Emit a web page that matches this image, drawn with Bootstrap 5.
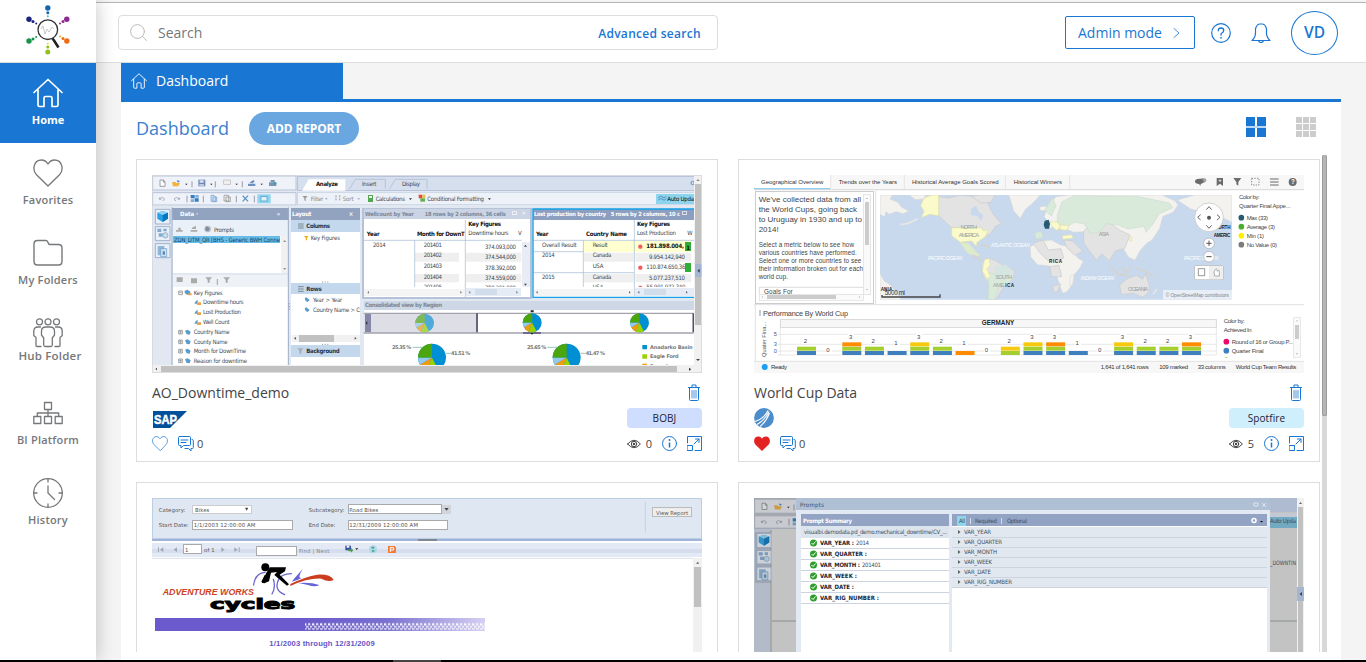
<!DOCTYPE html>
<html lang="en">
<head>
<meta charset="utf-8">
<title>Dashboard</title>
<link href="https://cdn.jsdelivr.net/npm/bootstrap@5.3.0/dist/css/bootstrap.min.css" rel="stylesheet">
<style>
:root{--hub:#1976d2}
body{font-family:"Open Sans","Noto Sans",sans-serif;background:#f4f4f4;color:#444;font-size:14px;height:662px;overflow:hidden}
svg{display:block;flex:none}
.ln{fill:none;stroke:currentColor;stroke-linecap:round;stroke-linejoin:round}
.shell{height:660px}
.side{width:96px;background:#fff;z-index:3;box-shadow:0 0 18px rgba(0,0,0,.24)}
.brand{height:62px}
.rule{height:1px;background:#ddd}
.side-link{height:80px;padding-top:15px;color:#75787b;font-size:11px;font-weight:600;letter-spacing:.2px;text-decoration:none;line-height:16px}
.side-link .lbl{margin-top:4px}
.side-link.on{background:var(--hub);color:#fff;font-weight:700;letter-spacing:0}
.side-link.hub .lbl{margin-top:0;padding-left:4px;font-size:11.5px}
.topbar{border-top:1px solid #b4b4b4;border-bottom:1px solid #ddd;background:#fff;margin-top:2px;height:61px;padding:0 28px 0 22px}
.finder{width:600px;height:35px;border:1px solid #ddd;border-radius:4px;padding:0 16px 0 11px}
.finder .hint{color:#777;margin-left:11px}
.finder .adv{font-size:12px;letter-spacing:.3px;padding-top:2px}
.blue{color:var(--hub)}
.admin{width:130px;height:33px;border:1px solid var(--hub);border-radius:2px;font-size:14px;padding:0 11px 0 12px}
.avatar{width:47px;height:44px;border:1px solid var(--hub);border-radius:50%;font-size:15.5px;font-weight:600}
.page{margin:0 25px}
.tabbar{height:39px;border-bottom:3px solid var(--hub)}
.tabbar .cur{width:222px;height:39px;background:var(--hub);color:#fff;padding:0 0 4px 10px;font-size:14px}
.panel{height:558px;background:#fff}
.headrow{height:53px;padding:0 25px 0 15px}
.headrow h1{font-size:18px;font-weight:400;margin:0;width:113px;color:#3a7fd0}
.headrow svg{margin-bottom:3px}
.addbtn{width:110px;height:33px;border-radius:17px;background:#6aa7e1;color:#fff;font-size:12px;font-weight:700;letter-spacing:-.15px}
.scroller{height:497px;overflow:hidden;padding:4px 0 0 15px}
.tiles{display:grid;grid-template-columns:582px 582px;gap:20px;grid-auto-rows:303px}
.tile{border:1px solid #ddd;background:#fff;padding:15px}
.trackbar{width:5px;height:497px;background:#d8d8d8;margin-left:2px}
.trackbar div{height:261px;background:#b5b5b5;border:1px solid #9b9b9b;border-width:0 1px 1px;border-radius:2px}
.ttl{height:20px;margin-top:10px;line-height:20px;font-size:14px}
.ttl svg{margin:1px 2px 0 0}
.logo-row{height:20px;margin-top:5px}
.tagpill{width:75px;height:20px;border-radius:4px;background:#cfdefe;color:#223;font-size:10px;letter-spacing:.1px;line-height:21px;text-align:center}
.tagpill.cy{background:#d0effd}
.acts{height:20px;margin-top:6px;font-size:11px}
.acts svg{margin-bottom:1px}
.acts .chats{margin-left:3px}
.acts .views{margin:0 10px 0 5px}
.gap10{margin-left:10px}
.base{height:2px;background:#000}
.base div{width:48px;height:2px;margin-left:393px;background:#444}
.tah{font-family:"DejaVu Sans Condensed","DejaVu Sans",sans-serif;font-size:18px}
.ver{font-family:"DejaVu Sans",sans-serif;font-size:17px}
.ari{font-family:"Liberation Sans",sans-serif;font-size:19px}
.bd{font-weight:700}
.sq rect{shape-rendering:crispEdges}
</style>
</head>
<body>
<svg width="0" height="0" class="position-absolute">
 <symbol id="trash" viewBox="0 0 12 17"><path class="ln" d="M.5 3.500h11M4 3V1h4v2M1.500 3.500v12q0 1 1 1h7q1 0 1-1v-12"/><path class="ln" stroke-width=".8" d="M4 6.500v7.500M6 6.500v7.500M8 6.500v7.500"/></symbol>
 <symbol id="heart" viewBox="0 0 30 28"><path class="ln" stroke-width="1.300" d="M15 27 3.500 15.800C-1 11 .5 1 8.500 1 12.500 1 15 5 15 5s2.500-4 6.500-4C29.500 1 31 11 26.500 15.800z"/></symbol>
 <symbol id="chat" viewBox="0 0 16 16"><path class="ln" d="M1.500.5h10q1 0 1 1v7q0 1-1 1h-6L3 12V9.500H1.500q-1 0-1-1v-7q0-1 1-1zM3 4h7M3 6.500h5M14 3.500q1.300 0 1.300 1v7q0 1-1 1H13V15l-2.500-2.500H7"/></symbol>
 <symbol id="eye" viewBox="0 0 14 10"><path class="ln" stroke-width="1" d="M.6 5Q7-2.600 13.400 5 7 12.600.6 5z"/><circle cx="7" cy="5" r="2.700" class="ln"/><circle cx="7" cy="5" r="1.200" fill="currentColor"/></symbol>
 <symbol id="info" viewBox="0 0 15 15"><circle cx="7.500" cy="7.500" r="7" class="ln"/><path d="M7.500 6.500v5" stroke="currentColor" stroke-width="1.500"/><circle cx="7.500" cy="4" r="1" fill="currentColor"/></symbol>
 <symbol id="expand" viewBox="0 0 15 15"><path class="ln" d="M.5 7V.5h14v14H8M.5 9.500h5v5h-5zM7 8l5-5M8.500 3H12v3.500"/></symbol>
 <symbol id="house" viewBox="0 0 30 30"><path class="ln" stroke-width="1.700" d="M1 14.500 15 1.500l14 13M5 11.500V27q0 1.500 1.500 1.500H11V20q0-1.500 1.500-1.500h5q1.500 0 1.500 1.500v8.500h4.500Q25 28.500 25 27V11.500"/></symbol>
 <symbol id="pie" viewBox="-30 -30 60 60"><circle r="28" fill="#008fd3"/><path d="M0 0V-28A28 28 0 0 0-28 0z" fill="#4ba50c"/><path d="M0 0H-28A28 28 0 0 0-24 14z" fill="#93c9ec"/><path d="M0 0-24 14A28 28 0 0 0-11 26z" fill="#f39b0a"/><path d="M0 0-11 26A28 28 0 0 0 13 25z" fill="#99d101"/></symbol>
 <symbol id="tools" viewBox="48 45 435 92"><rect x="50" y="48" width="430" height="42" fill="#eff2f8" stroke="#b7c3d8" stroke-width="3"/><rect x="50" y="98" width="430" height="37" fill="#eff2f8" stroke="#b7c3d8" stroke-width="3"/>
  <g fill="none" stroke="#6c7380" stroke-width="2"><path d="M72 60h10l5 5v14H72zM82 60v6h5M168 64v18M238 64v18M319 64v18M153 107v20M202 107v20M301 107v20M355 107v20" fill="#fff"/><path d="M72 112l-3 5 7 1M70 117q9-9 15-1-1 7-5 6M129 112l3 5-7 1M130 117q-9-9-15-1 1 7 5 6" stroke="#8b95a5"/></g>
  <path d="M108 66h10l3 3h11l-5 10h-16z" fill="#f2b33b"/><path d="M122 61l10 2-6 5z" fill="#3d85c8"/><path d="M147 71h8l-4 4zM222 71h8l-4 4zM298 71h8l-4 4zM373 71h8l-4 4z" fill="#222"/>
  <rect x="187" y="59" width="21" height="20" fill="#7389b3"/><rect x="191" y="61" width="12" height="7" fill="#dce6f5"/><rect x="190" y="72" width="14" height="6" fill="#bccbe3"/>
  <rect x="263" y="60" width="20" height="13" fill="#eee" stroke="#bbb" stroke-width="2"/><path d="M336 71h22v7h-22zM340 68l12-8 4 4-6 6z" fill="#6d8fbf"/><path d="M399 67h22v11h-22zM404 60h12v6h-12z" fill="#7d96ae"/><circle cx="416" cy="70" r="5" fill="#45a1b6"/>
  <path d="M164 105h12v10h-12zM176 115h12v10h-12z" fill="#337ec0"/><path d="M178 105h10v8h-10zM164 118h10v8h-10z" fill="#7eadd9"/><path d="M225 106h9l5 5v13h-14zM231 111h11v14h-11z" fill="#cfe1f4" stroke="#6a9ccc" stroke-width="2"/><path d="M264 106h14v17h-14zM270 111h13v14h-13z" fill="#eee" stroke="#888" stroke-width="2"/><path d="M320 107l16 17M336 107l-16 17" stroke="#5c90c6" stroke-width="4"/><rect x="364" y="103" width="40" height="27" fill="#91d4ef"/><rect x="375" y="110" width="18" height="13" fill="#dff3fc" stroke="#4c8fb5" stroke-width="2"/></symbol>
 <symbol id="rail" viewBox="54 142 52 160"><g stroke="#9eb1cf" stroke-width="3" fill="#eaf0f8"><path d="M58 148h44v44H58zM58 200h44v42H58zM58 251h44v42H58z"/></g><path d="M64 158l16-5 16 5v18l-16 10-16-10z" fill="#29a0e5"/><path d="M64 158l16-5 16 5-16 7z" fill="#8cd3f5"/><path d="M80 165l16-7v18l-16 10z" fill="#0876be"/><path d="M64 206h12v10H64zM82 206h10v8H82zM68 220h12v10H68z" fill="#81abd1"/><circle cx="88" cy="226" r="8" fill="#c8ddec" stroke="#739dbf" stroke-width="2"/><path d="M65 258h20v28H65z" fill="#8fb5d8"/><path d="M74 266h18v24H74z" fill="#cfe2f2" stroke="#6698c6" stroke-width="2"/><path d="M80 274h7v10h-7z" fill="#5b8ab9"/></symbol>
</svg>

<div class="shell d-flex">
 <aside class="side d-flex flex-column position-relative">
  <div class="brand d-flex justify-content-center">
   <svg width="46" height="56" viewBox="25 0 46 56"><circle cx="47.800" cy="29.700" r="9.800" fill="#fff" stroke="#333" stroke-width="1.300"/><path d="M41 29l2-3 2 8 2-5 2 3 3-5 2 2" fill="none" stroke="#bbb" stroke-width=".8"/><path d="M52.500 38.500l1.500 2 4.500 7" stroke="#222" stroke-width="2.600" fill="none"/>
   <g fill="#1565b0"><circle cx="47.800" cy="8" r="2.700"/><circle cx="47.800" cy="12.800" r="1.500"/><circle cx="47.800" cy="16.300" r="1" fill="#45b8cf"/></g><g fill="#1b2380"><circle cx="29" cy="19.300" r="2.700"/><circle cx="33" cy="21.500" r="1.500"/><circle cx="36.200" cy="23.500" r="1"/></g><g fill="#8b2a92"><circle cx="66.800" cy="19.300" r="2.700"/><circle cx="63" cy="21.500" r="1.500"/><circle cx="60" cy="23.500" r="1"/></g><g fill="#17934a"><circle cx="29" cy="41" r="2.700"/><circle cx="33" cy="39" r="1.500"/><circle cx="36.200" cy="37" r="1"/></g><g fill="#ef6c12"><circle cx="66.800" cy="41" r="2.700"/><circle cx="63" cy="38.500" r="1.500"/><circle cx="60" cy="36.500" r="1" fill="#f5a623"/></g><g fill="#93c01f"><circle cx="47.800" cy="52" r="2.500"/><circle cx="47.800" cy="47" r="1.600"/><circle cx="47.800" cy="43.800" r="1" fill="#e5e233"/></g></svg>
  </div>
  <div class="rule"></div>
  <a class="side-link on d-flex flex-column align-items-center"><svg width="30" height="30"><use href="#house"/></svg><span class="lbl">Home</span></a>
  <a class="side-link d-flex flex-column align-items-center"><svg width="30" height="30" viewBox="0 -1 30 30"><use href="#heart" width="30" height="28"/></svg><span class="lbl">Favorites</span></a>
  <a class="side-link d-flex flex-column align-items-center"><svg width="30" height="30" viewBox="0 0 30 30"><path class="ln" stroke-width="1.400" d="M4.500 2.500h8.500q1.500 0 2 2t2 2h8.500q3.500 0 3.500 3.500v13.500q0 3.500-3.500 3.500h-21Q1 27 1 23.500V6q0-3.500 3.500-3.500z"/></svg><span class="lbl">My Folders</span></a>
  <a class="side-link hub d-flex flex-column align-items-center"><svg width="30" height="30" viewBox="0 0 30 30"><g class="ln" stroke-width="1.300"><circle cx="6.500" cy="3.800" r="3"/><circle cx="15" cy="3.800" r="3"/><circle cx="23.500" cy="3.800" r="3"/><path d="M13 9q-4.500 0-4.500 4v4l2.200 3v7q0 1.500 1.500 1.500h5.600q1.500 0 1.500-1.500v-7l2.200-3v-4q0-4-4.500-4zM7.500 9H5Q.8 9 .8 13v4.500l2.200 2v8q0 1 1 1h4M22.500 9H25q4.200 0 4.200 4v4.500l-2.200 2v8q0 1-1 1h-4"/></g></svg><span class="lbl">Hub Folder</span></a>
  <a class="side-link d-flex flex-column align-items-center"><svg width="30" height="30" viewBox="0 0 30 30"><path class="ln" stroke-width="1.300" d="M11.500 4.500h7v7h-7zM.8 18.500h7v7h-7zM11.500 18.500h7v7h-7zM22.200 18.500h7v7h-7zM15 11.500v7M4.300 18.500v-3.500h21.400v3.500"/></svg><span class="lbl">BI Platform</span></a>
  <a class="side-link d-flex flex-column align-items-center"><svg width="30" height="30" viewBox="0 0 30 30"><circle cx="15" cy="15" r="14.300" class="ln" stroke-width="1.300"/><path class="ln" stroke-width="1.300" d="M15 1v3M15 26v3M1 15h3M26 15h3M15 8v7l6.500 6.500"/></svg><span class="lbl">History</span></a>
 </aside>

 <div class="flex-grow-1">
  <header class="topbar d-flex align-items-center">
   <div class="finder d-flex align-items-center">
    <svg width="17" height="17" viewBox="0 0 17 17"><g class="ln" style="stroke:#bbb"><circle cx="7.500" cy="7.500" r="6.900"/><path d="M12.500 12.500l4 4"/></g></svg>
    <span class="hint">Search</span><span class="adv ms-auto blue fw-semibold">Advanced search</span>
   </div>
   <button class="admin btn blue ms-auto d-flex align-items-center justify-content-between"><span>Admin mode</span><svg width="14" height="12" viewBox="0 0 14 12"><path class="ln" stroke-width=".8" d="M5 1.500l5 4.500-5 4.500"/></svg></button>
   <svg class="blue ms-3" width="20" height="20" viewBox="0 0 20 20"><circle cx="10" cy="10" r="9.300" class="ln" stroke-width="1.200"/><path class="ln" stroke-width="1.300" d="M7.300 7.800Q7.300 5 10 5t2.700 2.500q0 1.500-1.500 2.300T10 12.200"/><circle cx="10" cy="14.800" r=".9" fill="currentColor"/></svg>
   <svg class="blue" style="margin:0 20px" width="20" height="20" viewBox="0 0 20 20"><path class="ln" stroke-width="1.200" d="M1 17.500h18q-3.500-3-3.500-7.500V6q-1-4.500-4-5H8.500q-3 .5-4 5v4q0 4.500-3.500 7.500zM7.500 17.500q.5 2 2.500 2t2.500-2"/></svg>
   <div class="avatar blue d-flex align-items-center justify-content-center">VD</div>
  </header>
  <main class="page">
   <div class="tabbar"><div class="cur d-flex align-items-center"><svg width="16" height="16" viewBox="0 0 30 30"><use href="#house"/></svg><span style="margin-left:9px">Dashboard</span></div></div>
   <section class="panel">
    <div class="headrow d-flex align-items-center"><h1>Dashboard</h1><button class="addbtn btn p-0 border-0">ADD REPORT</button>
     <svg class="ms-auto" width="20" height="20" viewBox="0 0 20 20"><path fill="#bbd8f2" d="M0 9h20v2H0z"/><path fill="#1976d2" d="M0 0h9v9H0zM11 0h9v9h-9zM0 11h9v9H0zM11 11h9v9h-9z"/></svg>
     <svg style="margin-left:30px" width="20" height="20" viewBox="0 0 20 20"><path fill="#ccc" d="M0 0h6v6H0zM7 0h6v6H7zM14 0h6v6h-6zM0 7h6v6H0zM7 7h6v6H7zM14 7h6v6h-6zM0 14h6v6H0zM7 14h6v6H7zM14 14h6v6h-6z"/></svg>
    </div>
    <div class="d-flex">
    <div class="scroller"><div class="tiles">

     <article class="tile">
      <svg class="sq" width="550" height="198" viewBox="48 45 1650 594">
       <rect x="48" y="45" width="1650" height="594" fill="#e2e8f2"/>
       <svg x="48" y="45" width="435" height="92"><use href="#tools"/></svg>
       <rect x="485" y="48" width="1190" height="44" fill="#d5dfed" stroke="#b7c3d8" stroke-width="3"/><path d="M498 92l20-34h110v34z" fill="#fff"/><path d="M640 88l18-30h90v28M760 88l18-30h95v28" fill="none" stroke="#a9b6cb" stroke-width="2"/>
       <rect x="485" y="96" width="1190" height="38" fill="#edf1f8" stroke="#c2cddd" stroke-width="2"/>
       <g class="tah" fill="#3c4350"><text x="540" y="79" class="bd" fill="#111" textLength="66">Analyze</text><text x="678" y="79" textLength="43">Insert</text><text x="798" y="79" textLength="54">Display</text>
       <text x="524" y="122" textLength="38" fill="#888">Filter</text><text x="620" y="122" textLength="33" fill="#888">Sort</text><text x="719" y="122" textLength="88">Calculations</text><text x="874" y="122" textLength="170">Conditional Formatting</text></g>
       <path d="M499 108h16l-6 7v9l-4-3v-6z" fill="#999"/><path d="M567 115h8l-4 4zM664 115h8l-4 4z" fill="#99a"/><path d="M819 115h9l-5 5zM1056 115h9l-5 5z" fill="#333"/><path d="M600 106v18M611 106v18" stroke="#999" stroke-width="3" stroke-dasharray="6 3"/><rect x="695" y="104" width="15" height="23" rx="2" fill="#53a951"/><rect x="698" y="108" width="9" height="5" fill="#fff"/><path d="M848 104h11v11h-11z" fill="#e34b3f"/><path d="M859 104h9v11h-9z" fill="#e4c34a"/><path d="M853 115h14v10h-14z" fill="#65af4f"/>
       <rect x="1560" y="101" width="115" height="30" fill="#8ed4ef"/><path d="M1567 113q7-8 12-2t12-2M1567 120q7-8 12-2t12-2" stroke="#4a91c3" stroke-width="3" fill="none"/><text x="1594" y="122" class="tah" textLength="80">Auto Upda</text><circle cx="1670" cy="69" r="5" fill="none" stroke="#5b94cf" stroke-width="3"/>
       <svg x="54" y="142" width="52" height="160"><use href="#rail"/></svg>
       <!-- data pane -->
       <rect x="108" y="143" width="350" height="37" fill="#92a3c0"/><rect x="110" y="180" width="346" height="48" fill="#eaf0f8"/><rect x="110" y="228" width="346" height="112" fill="#fff"/><rect x="110" y="228" width="322" height="22" fill="#66bde9"/><rect x="434" y="228" width="22" height="112" fill="#f1f1f1"/><path d="M441 246h10l-5-6zM441 324h10l-5 6z" fill="#999"/>
       <rect x="110" y="346" width="346" height="34" fill="#eef1f6"/><rect x="110" y="381" width="346" height="235" fill="#fff"/><path d="M108 142v474M457 142v474" stroke="#9eaec8" stroke-width="3"/>
       <g fill="#aaa"><path d="M120 210h20v5h-20zM127 203h7v7h-7zM164 210h20v5h-20zM168 203l12-6v10h-12zM122 352h18v14h-18zM165 355h18v15h-18zM208 352h20l-7 8v8h-6v-8zM262 352h20l-7 8v8h-6v-8z"/></g><path d="M244 357v18" stroke="#777" stroke-width="2"/><circle cx="215" cy="207" r="10" fill="#b8bec8"/><path d="M210 199l11 6-4 9-9-3z" fill="#7c8a9a"/>
       <g class="tah" fill="#454b55"><text x="132" y="167" class="bd" fill="#fff" textLength="54">Data ·</text><text x="422" y="167" class="bd" fill="#fff">«</text><text x="234" y="216" textLength="60">Prompts</text><text x="114" y="246" fill="#173f66" textLength="318">ZDN_DTM_QR [BHS - Generic BWH Conne</text>
       <text x="173" y="405" textLength="87">Key Figures</text><text x="201" y="432" textLength="122">Downtime hours</text><text x="201" y="462" textLength="114">Lost Production</text><text x="201" y="492" textLength="80">Well Count</text><text x="173" y="522" textLength="108">Country Name</text><text x="173" y="552" textLength="102">County Name</text><text x="173" y="579" textLength="157">Month for DownTime</text><text x="173" y="609" textLength="160">Reason for downtime</text></g>
       <g fill="#fff" stroke="#777" stroke-width="2"><path d="M128 393h11v11h-11zM130 398h7M128 511h11v11h-11zM130 516h7M133 512v9M128 540h11v11h-11zM130 545h7M133 541v9M128 568h11v11h-11zM130 573h7M133 569v9M128 597h11v11h-11zM130 602h7M133 598v9"/></g>
       <g fill="#5a9ccb"><path d="M146 392l9-3 8 6v9h-10l-7-5zM147 512l8-3 9 6-3 9-9-1zM147 541l8-3 9 6-3 9-9-1zM147 569l8-3 9 6-3 9-9-1zM147 598l8-3 9 6-3 9-9-1zM179 424l6-5v12h-10zM179 454l6-5v12h-10zM179 484l6-5v12h-10z"/></g><g fill="#f0a24a"><path d="M157 400h10v6h-10zM183 427h12v8h-12zM183 457h12v8h-12zM183 487h12v8h-12z"/></g>
       <!-- layout pane -->
       <rect x="464" y="143" width="209" height="37" fill="#92a3c0"/><rect x="466" y="180" width="206" height="436" fill="#fff"/><rect x="466" y="181" width="206" height="34" fill="#c3d8ec"/><rect x="466" y="369" width="206" height="34" fill="#c3d8ec"/><rect x="466" y="556" width="206" height="34" fill="#c3d8ec"/><rect x="468" y="524" width="204" height="22" fill="#f1f1f1"/><rect x="489" y="526" width="105" height="19" fill="#c1c1c1"/>
       <path d="M486 192h17M486 198h17M486 204h17M486 380h17M486 387h17M486 394h17" stroke="#7d8894" stroke-width="3"/><path d="M504 228h14l-5 6v7h-4v-7z" fill="#edb21c"/><path d="M484 565h18l-6 7v9h-6v-9z" fill="#a6adb6"/><path d="M480 531v8l-6-4zM656 531v8l6-4z" fill="#555"/><path d="M506 415l5-3 10 8-6 6-6-3zM506 445l5-3 10 8-6 6-6-3z" fill="#5a9ccb"/><path d="M558 366h22M558 553h22M460 430v22" stroke="#888" stroke-width="3" stroke-dasharray="3 5"/>
       <g class="tah" fill="#454b55"><text x="468" y="167" class="bd" fill="#fff" textLength="58">Layout</text><text x="638" y="167" class="bd" fill="#fff">×</text><g class="bd" fill="#26344a"><text x="511" y="204" textLength="71">Columns</text><text x="511" y="392" textLength="46">Rows</text><text x="511" y="578" textLength="100">Background</text></g><text x="524" y="240" textLength="88">Key Figures</text><text x="531" y="426" textLength="88">Year &gt; Year</text><text x="531" y="456" textLength="141">Country Name &gt; C</text></g>
       <!-- well count table -->
       <rect x="681" y="145" width="504" height="268" fill="#fff" stroke="#b6c2d7" stroke-width="5"/><rect x="683" y="147" width="499" height="31" fill="#cad4e4"/>
       <g fill="#efefef"><path d="M837 278h132v27H837zM837 342h132v25H837zM990 278h166v27H990zM990 342h166v25H990z"/></g><path d="M683 241h474M836 241v140M988 180v233" stroke="#9fb7d0" stroke-width="2"/>
       <rect x="1157" y="245" width="24" height="137" fill="#e8edf5"/><path d="M1164 260h9l-5-6zM1164 371h9l-5 6z" fill="#445"/><rect x="684" y="387" width="303" height="22" fill="#f4f4f4"/><rect x="990" y="385" width="164" height="23" fill="#e5ecf5"/><rect x="1017" y="387" width="65" height="19" fill="#d1ddeb"/><path d="M699 393v8l-5-4zM973 393v8l5-4zM1003 393v8l-5-4zM1141 393v8l5-4z" fill="#777"/>
       <g class="tah" fill="#42464d"><g class="bd" fill="#7e8797" font-size="17"><text x="687" y="168" textLength="146">Wellcount by Year</text><text x="866" y="168" textLength="243">18 rows by 2 columns, 36 cells</text></g><g class="bd" fill="#111"><text x="692" y="227" textLength="39">Year</text><text x="843" y="227" textLength="143">Month for DownT</text><text x="997" y="197" textLength="98">Key Figures</text></g><text x="997" y="225" textLength="121">Downtime hours</text><text x="1146" y="225">V</text><text x="711" y="260" textLength="38">2014</text>
       <text x="863" y="260" textLength="55">201401</text><text x="863" y="292" textLength="55">201402</text><text x="863" y="324" textLength="55">201403</text><text x="863" y="356" textLength="55">201404</text><text x="1047" y="267" textLength="93">374.093,000</text><text x="1047" y="298" textLength="93">374.544,000</text><text x="1047" y="330" textLength="93">378.392,000</text><text x="1047" y="359" textLength="93">374.559,000</text></g>
       <svg x="852" y="367" width="310" height="14" viewBox="852 367 310 14"><g class="tah" fill="#555"><text x="863" y="387" textLength="55">201405</text><text x="1047" y="390" textLength="93">380.201,000</text></g></svg>
       <rect x="1130" y="155" width="10" height="8" fill="none" stroke="#fff" stroke-width="2"/><path d="M1159 155l8 8M1167 155l-8 8" stroke="#fff" stroke-width="2"/>
       <!-- production table -->
       <rect x="1190" y="147" width="486" height="265" fill="#fff"/><rect x="1190" y="147" width="486" height="32" fill="#8d9fc0"/><rect x="1192" y="243" width="472" height="32" fill="#ffffcf"/><path d="M1192 243h150v95h-150z" fill="#fff"/><path d="M1343 278h150v27h-150zM1498 278h168v27h-168zM1343 342h150v25h-150zM1498 342h168v25h-168z" fill="#efefef"/><path d="M1192 241h482M1342 241v140M1495 180v228M1192 275h150M1192 338h302" stroke="#9fb7d0" stroke-width="2"/><rect x="1647" y="246" width="18" height="27" fill="#2eae35"/><rect x="1647" y="309" width="18" height="27" fill="#2eae35"/>
       <circle cx="1513" cy="260" r="6.500" fill="#f65a5f"/><circle cx="1513" cy="323" r="6.500" fill="#f65a5f"/><rect x="1194" y="387" width="299" height="22" fill="#f4f4f4"/><rect x="1498" y="385" width="176" height="23" fill="#e5ecf5"/><rect x="1525" y="387" width="65" height="19" fill="#d1ddeb"/><path d="M1205 393v8l-5-4zM1479 393v8l5-4zM1510 393v8l-5-4zM1650 393v8l5-4z" fill="#667"/>
       <g class="tah" fill="#42464d"><g class="bd" fill="#fff" font-size="17"><text x="1194" y="168" textLength="216">Lost production by country</text><text x="1424" y="168" textLength="208">5 rows by 2 columns, 10 c</text></g><g class="bd" fill="#111"><text x="1200" y="228" textLength="37">Year</text><text x="1350" y="228" textLength="123">Country Name</text><text x="1503" y="197" textLength="99">Key Figures</text><text x="1531" y="263" textLength="113">181.898.004,</text><text x="1651" y="269">1</text></g><text x="1503" y="225" textLength="117">Lost Production</text><text x="1654" y="225">W</text><text x="1218" y="260" textLength="104">Overall Result</text><text x="1370" y="260" textLength="45">Result</text><text x="1218" y="292" textLength="38">2014</text><text x="1370" y="292" textLength="56">Canada</text><text x="1370" y="324" textLength="32">USA</text><text x="1218" y="356" textLength="38">2015</text><text x="1370" y="356" textLength="56">Canada</text><text x="1539" y="296" textLength="108">9.954.142,940</text><text x="1531" y="327" textLength="117">110.874.650,36</text><text x="1539" y="359" textLength="108">5.077.237,510</text></g>
       <svg x="1350" y="367" width="310" height="14" viewBox="1350 367 310 14"><circle cx="1513" cy="384" r="6.500" fill="#f65a5f"/><g class="tah" fill="#555"><text x="1370" y="387" textLength="32">USA</text><text x="1531" y="387" textLength="117">55.991.972,340</text></g></svg>
       <path d="M1676 147H1191V412h485" fill="none" stroke="#12a0e8" stroke-width="4"/><rect x="1640" y="155" width="11" height="7" fill="none" stroke="#fff" stroke-width="2"/>
       <!-- region chart -->
       <rect x="683" y="422" width="992" height="194" fill="#fff"/><rect x="683" y="422" width="992" height="27" fill="#cdd7e6"/><text x="687" y="441" class="tah bd" fill="#7e8797" font-size="17" textLength="231">Consolidated view by Region</text>
       <rect x="683" y="459" width="342" height="59" fill="#dedee6"/><rect x="687" y="460" width="18" height="56" fill="#8687a8"/><path d="M694 484v10l-5-5z" fill="#223"/><path d="M683 460h990M683 519h990" stroke="#a3a3ad" stroke-width="4"/><path d="M1023 460v57M1672 460v57" stroke="#504e69" stroke-width="5"/><rect x="1161" y="516" width="54" height="7" fill="#6d6b92"/><path d="M1184 451h9v6h-9zM1185 519h6v4h-6z" fill="#222"/>
       <use href="#pie" x="836" y="459" width="60" height="60" opacity=".65"/><use href="#pie" x="1158" y="458" width="61" height="61"/><use href="#pie" x="1480" y="458" width="61" height="61"/>
       <svg x="683" y="540" width="992" height="76" viewBox="683 540 992 76"><use href="#pie" x="843" y="548" width="90" height="90"/><use href="#pie" x="1247" y="548" width="90" height="90"/><g class="ver bd" fill="#777" style="font-size:15px"><text x="768" y="567" textLength="58">25.35 %</text><text x="945" y="585" textLength="58">41.51 %</text><text x="1173" y="567" textLength="58">25.65 %</text><text x="1349" y="585" textLength="58">41.47 %</text><text x="1542" y="567" textLength="128">Anadarko Basin</text><text x="1542" y="595" textLength="86">Eagle Ford</text><text x="1542" y="623" textLength="76">Permian</text></g><path d="M830 562q20 0 30 0M930 580h15M1234 562h30M1334 580h15" stroke="#6a9" stroke-width="2"/><path fill="#008fd3" d="M1519 555h14v13h-14z"/><path fill="#99d101" d="M1519 583h14v13h-14z"/><path fill="#f39b0a" d="M1519 611h14v13h-14z"/></svg>
       <rect x="48" y="616" width="1650" height="23" fill="#f1f1f1"/><rect x="75" y="618" width="1548" height="19" fill="#c1c1c1"/><rect x="1674" y="45" width="24" height="594" fill="#f1f1f1"/><rect x="1677" y="72" width="18" height="423" fill="#c1c1c1"/><path d="M1681 63h10l-5-6z" fill="#888"/><path d="M1680 597h12l-6 6zM1659 623l7 5-7 5zM63 623l-5 4 5 4z" fill="#444"/><rect x="1676" y="313" width="22" height="38" fill="#a5b6d2"/><path d="M1691 326v12l-7-6z" fill="#345"/><rect x="49" y="46" width="1648" height="592" fill="none" stroke="#d0d3d9" stroke-width="2"/>
      </svg>
      <div class="ttl d-flex justify-content-between"><span>AO_Downtime_demo</span><svg class="blue" width="12" height="17"><use href="#trash"/></svg></div>
      <div class="logo-row d-flex justify-content-between align-items-center"><svg class="mt-1" width="36" height="18" viewBox="0 0 36 18"><path fill="#01509c" d="M1 0h34L18 17H1z"/><text x="2" y="12.600" fill="#fff" class="ari bd" style="font-size:13.500px" textLength="23" lengthAdjust="spacingAndGlyphs" stroke="#fff" stroke-width=".5">SAP</text></svg><span class="tagpill">BOBJ</span></div>
      <div class="acts d-flex align-items-center"><svg class="blue" width="16" height="15" viewBox="0 0 30 28"><use href="#heart" width="30" height="28"/></svg><svg class="blue gap10" width="16" height="16"><use href="#chat"/></svg><span class="chats me-auto">0</span><svg width="14" height="10"><use href="#eye"/></svg><span class="views">0</span><svg class="blue" width="15" height="15"><use href="#info"/></svg><svg class="blue gap10" width="15" height="15"><use href="#expand"/></svg></div>
     </article>

     <article class="tile">
      <svg class="sq" width="550" height="198" viewBox="48 45 1650 594">
       <rect x="48" y="45" width="1650" height="594" fill="#fff"/><rect x="48" y="45" width="1650" height="43" fill="#f7f7f7"/><rect x="48" y="45" width="228" height="43" fill="#fff"/><path d="M48 89h1650" stroke="#ddd" stroke-width="4"/><path d="M48 86h228" stroke="#7cc6ee" stroke-width="3"/><path d="M278 45v42M499 45v42M802 45v42M995 45v42" stroke="#ddd" stroke-width="2"/>
       <g class="ari" fill="#333" style="font-size:18px"><text x="69" y="71" textLength="187">Geographical Overview</text><text x="302" y="71" textLength="175">Trends over the Years</text><text x="522" y="71" textLength="260">Historical Average Goals Scored</text><text x="827" y="71" textLength="145">Historical Winners</text></g>
       <g fill="#6b6b6b"><ellipse cx="1384" cy="64" rx="13" ry="8"/><ellipse cx="1395" cy="61" rx="10" ry="7" opacity=".6"/><path d="M1382 70l5 8 2-10zM1436 54h19v24l-9-7-10 7zM1486 54h24l-9 12v11l-6-4v-7z"/><circle cx="1664" cy="66" r="12"/></g><path d="M1442 62h8M1446 58v8" stroke="#fff" stroke-width="2"/><path d="M1541 55h22v20h-22z" fill="none" stroke="#888" stroke-width="3" stroke-dasharray="4 4"/><path d="M1596 57h26M1596 66h26M1596 75h26" stroke="#999" stroke-width="4"/><text x="1659" y="73" class="ari bd" fill="#fff">?</text>
       <rect x="52" y="94" width="355" height="337" fill="#fff" stroke="#ccc" stroke-width="4"/>
       <g class="ari" fill="#444" style="font-size:24px"><text x="62" y="126" textLength="307">We've collected data from all</text><text x="62" y="156" textLength="295">the World Cups, going back</text><text x="62" y="186" textLength="310">to Uruguay in 1930 and up to</text><text x="62" y="216" textLength="60">2014!</text></g>
       <g class="ari" fill="#444"><text x="62" y="260" textLength="286">Select a metric below to see how</text><text x="62" y="284" textLength="294">various countries have performed.</text><text x="62" y="308" textLength="308">Select one or more countries to see</text><text x="62" y="332" textLength="313">their information broken out for each</text><text x="62" y="356" textLength="88">world cup.</text><text x="78" y="401" textLength="86">Goals For</text></g>
       <path d="M64 402v-20h312" fill="none" stroke="#ccc" stroke-width="2"/><rect x="376" y="103" width="22" height="299" fill="#fafafa" stroke="#ddd" stroke-width="2"/><rect x="381" y="126" width="12" height="129" rx="5" fill="#ccc"/><rect x="64" y="402" width="312" height="19" fill="#fafafa" stroke="#ddd" stroke-width="2"/><rect x="86" y="405" width="208" height="12" rx="5" fill="#ccc"/><path d="M383 117h8l-4-4zM383 387h8l-4 4zM75 408l-4 3 4 4zM363 408l4 3-4 4z" fill="#bbb"/>
       <!-- map -->
       <svg x="426" y="105" width="1056" height="314" viewBox="426 105 1056 314"><rect x="426" y="105" width="1056" height="314" fill="#c9d9ed"/>
        <g fill="#f3f2ef" stroke="#d3d3d0" stroke-width="1.500"><path d="M426 105h38l-8 12 24 10 10 14 22 12-16 8-22-6-20 8-10-8-4 16-14-8zM514 105h50l-8 12-24 2zM812 105h95l-22 24-22 18-16 28-20-22-8-28zM905 141l16-3 8 7-12 8-12-3zM426 340l12 22 20 14 28 36 4 10h-64z"/>
        <path d="M918 170l14-36 22-24 38-5 280 0 40 18 8 12-15 22-30 12-10 36-14 22-10 14-14 8-20 22-16 30-20-10-22-36-18-18-16 22-10 22-18-26-28-12-20-28-32 2-24-10-28-6-26 4 4-18z"/>
        <path d="M876 262l24-18 40-4 30 16 26 4 24 34 16 10-10 20-16 18-4 28-20 26-12 4-10-28-10-30-20-24-36-4-20-24zM997 349l12-6-6 34-8-4zM1318 120l52-15h112v82l-24-12-22 14-14-22-20 2-8-14-36-8z"/></g>
        <g fill="#e2e3e2" stroke="#cacaca" stroke-width="2"><path d="M601 110l30 4 34-8 50 4 8 14 20-10 14 34 10 16 24 28-18 6-14 22-16 10-20-20-26-8-58 0-40-38z"/><path d="M700 109l26-4h45l-12 22-30 2zM730 312l20-18 24 8 30 20 26 10-4 24-22 14-30 48h-24l4-46-18-22zM1036 215l32-32 50 8 28 20 30 14-16 40-28 8-18 30-22-22-16 20-20-26-18-24zM885 250l30-10 16 30 38-4 8 28-20 12-30-6-20-20zM935 320l28-4 8 34-30 0zM944 378l24-6-10 24-12 0zM977 240l26 2 32 32-24 12-22-20zM1145 375l24-20 28-9 16 12 10-16 10 30 1 24-20 16-28-12-36 4z"/></g>
        <path d="M700 145l14-8 8 18 14 10-6 18-12-14-20-4z" fill="#c9d9ed"/>
        <g fill="#d9eadb" stroke="#c4d8c6" stroke-width="1.500"><path d="M958 165l14-40 36-18 190 2 96 20 10 14-40 18-20 32-20 24-6-18-48 8-30-12-36-4-18 24-28 6-20-30-30-4-28 18-22-18zM920 150l24-36 10 24-14 30zM890 218l20-4 6 18-22 6zM748 338l30 4 28-10 20 22-16 18-28 12-12 36-20-2 2-40z"/></g>
        <g fill="#fbfacb" stroke="#e0dfa8" stroke-width="2"><path d="M558 114l24-9h20v62l-28-4-24 10 8-20-10-16zM641 203h88l8 10 14-4-10 22-24 16-2 12-14-16-34 4-26-20zM739 300l14-5 4 20-10 12 10 22-10 8-14-24zM937 185l22 2 10 16-14 8-14-14zM967 195l26 2-8 14-24-4zM972 228l28-4 6 10-30 4zM1174 232l5-3 3 14-6 0z"/></g><path d="M666 248l26 2 20 24 14 10-10 8-28-14z" fill="#deebc8"/><path d="M770 318l30-4 24 16-8 20-22 12-22-14z" fill="#d4e5e2"/>
        <path d="M920 182l12-3 4 13-3 14-12 0-4-12z" fill="#265b72"/><path d="M702 286l16 6 12 10M728 255l18 2 10 8M1116 318l26 25 30 4M1152 322l12 16 16-18M1195 324l30 12 20 14" fill="none" stroke="#d2d4d4" stroke-width="7"/><path d="M1245 403l12-16M540 176l-30 14-22 4" stroke="#e6e6e2" stroke-width="5" fill="none"/>
        <g class="ari" style="font-size:17px" fill="#9da1a2"><text x="668" y="207" textLength="49">NORTH</text><text x="662" y="232" textLength="61">AMERICA</text><text x="772" y="357" textLength="50">SOUTH</text><text x="765" y="380" textLength="34">AME</text><text x="1082" y="228" textLength="31">ASIA</text><text x="1170" y="392" textLength="60">OCEANIA</text></g>
        <g class="ari bd" style="font-size:14px" fill="#222"><text x="428" y="393" textLength="35">ANIA</text><text x="802" y="381" textLength="26">ICA</text><text x="933" y="308" textLength="39">RICA</text><text x="1440" y="207" textLength="38">ORTH</text><text x="1427" y="232" textLength="50">AMERIC</text></g>
        <g class="ari" style="font-size:15px" font-style="italic" fill="#fff"><text x="570" y="299" textLength="102">PACIFIC OCEAN</text><text x="759" y="260" textLength="116">ATLANTIC OCEAN</text><text x="1028" y="359" textLength="100">INDIAN OCEAN</text><text x="1338" y="299" textLength="102">PACIFIC OCEAN</text></g>
        <path d="M432 405v6h174v-8" fill="none" stroke="#444" stroke-width="4"/><text x="440" y="406" class="ari" fill="#333" textLength="61">5000 mi</text><rect x="1275" y="391" width="207" height="28" fill="#e8eef6"/><text x="1283" y="410" class="ari" style="font-size:14.500px" fill="#7c8791" textLength="190">© OpenStreetMap contributors</text>
        <circle cx="1413" cy="172" r="43" fill="#fff" stroke="#bbb" stroke-width="2"/><path d="M1405 149l8-9 8 9M1405 196l8 9 8-9M1388 164l-9 8 9 8M1437 164l9 8-9 8" fill="none" stroke="#666" stroke-width="3"/><circle cx="1413" cy="173" r="6" fill="#555"/><circle cx="1413" cy="250" r="16" fill="#fff" stroke="#aaa" stroke-width="2"/><circle cx="1413" cy="290" r="16" fill="#fff" stroke="#aaa" stroke-width="2"/><path d="M1405 250h16M1413 242v16M1405 290h16" stroke="#555" stroke-width="3"/><rect x="1370" y="317" width="86" height="42" rx="4" fill="#fff" stroke="#bbb" stroke-width="2"/><rect x="1412" y="318" width="43" height="40" fill="#eee"/><path d="M1381 326h19v21h-19z" fill="none" stroke="#666" stroke-width="2"/><path d="M1428 336q8-18 10-2 6-8 6 4v10h-14z" fill="#fff" stroke="#888" stroke-width="2"/>
       </svg>
       <g class="ari" fill="#444" style="font-size:18px"><text x="1503" y="116" textLength="62">Color by:</text><text x="1503" y="143" textLength="154">Quarter Final Appe...</text><text x="1526" y="179" textLength="64">Max (33)</text><text x="1526" y="206" textLength="85">Average (3)</text><text x="1526" y="233" textLength="52">Min (1)</text><text x="1526" y="260" textLength="91">No Value (0)</text><text x="1457" y="488" textLength="63">Color by:</text><text x="1457" y="515" textLength="84">Achieved In</text><text x="1481" y="551" textLength="184">Round of 16 or Group P...</text><text x="1481" y="578" textLength="96">Quarter Final</text></g>
       <circle cx="1510" cy="173" r="8.500" fill="#265b72"/><circle cx="1510" cy="200" r="8.500" fill="#4cae2c"/><circle cx="1510" cy="227" r="8.500" fill="#fff000"/><circle cx="1510" cy="254" r="8.500" fill="#7c7c7c"/><circle cx="1465" cy="545" r="8.500" fill="#f00569"/><circle cx="1465" cy="572" r="8.500" fill="#3f7fbd"/><path d="M1459 594q6-5 12 0z" fill="#a5cf2f"/>
       <path d="M48 434h1650M48 604h1650M52 434v170M413 92v342" stroke="#e1e1e1" stroke-width="3"/><rect x="64" y="451" width="4" height="16" fill="#ccc"/><text x="75" y="467" class="ari" fill="#444" style="font-size:22px" textLength="255">Performance By World Cup</text>
       <rect x="127" y="478" width="1308" height="24" fill="#f7f7f7" stroke="#ccc" stroke-width="2"/><path d="M127 478v107M1435 478v107M119 523h1316M119 553h1316M119 573h1316M119 585h1316" stroke="#ddd" stroke-width="2" fill="none"/><text x="731" y="496" class="ari bd" fill="#222" textLength="98">GERMANY</text>
       <g class="ari" fill="#555" style="font-size:17px"><text x="107" y="528">5</text><text x="107" y="559" fill="#36a">3</text><text x="107" y="580" fill="#36a">0</text><text transform="translate(83 591) rotate(-90)" textLength="106">Quater Fina...</text></g>
       <g id="cupBars"></g>
       <rect x="1667" y="473" width="20" height="119" fill="#fafafa" stroke="#ddd" stroke-width="2"/><rect x="1671" y="494" width="12" height="44" rx="5" fill="#ccc"/><path d="M1673 484h8l-4-4zM1673 580h8l-4 4z" fill="#bbb"/>
       <rect x="48" y="606" width="1650" height="33" fill="#f7f7f7"/><circle cx="80" cy="621" r="9" fill="#1b9df0"/><g class="ari" fill="#333" style="font-size:18px"><text x="99" y="628" textLength="48">Ready</text><text x="1088" y="627" textLength="144">1,641 of 1,641 rows</text><text x="1264" y="627" textLength="86">109 marked</text><text x="1379" y="627" textLength="84">33 columns</text><text x="1493" y="627" textLength="182">World Cup Team Results</text></g>
      </svg>
      <div class="ttl d-flex justify-content-between"><span>World Cup Data</span><svg class="blue" width="12" height="17"><use href="#trash"/></svg></div>
      <div class="logo-row d-flex justify-content-between align-items-center"><svg width="20" height="20" viewBox="0 0 20 20"><circle cx="10" cy="10" r="9.900" fill="#4b8ccb"/><path d="M1 13.500Q10 11 14 2.500M3 16.500Q11 12 15 3.500M6 18.500Q12 14 15.500 5" stroke="#fff" stroke-width="1.100" fill="none"/></svg><span class="tagpill cy">Spotfire</span></div>
      <div class="acts d-flex align-items-center"><svg width="16" height="15" viewBox="0 0 30 28"><path fill="#e32222" d="M15 28 2.500 16C-2 10 0 1 8 1c4.500 0 7 4 7 4s2.500-4 7-4c8 0 10 9 5.500 15z"/></svg><svg class="blue gap10" width="16" height="16"><use href="#chat"/></svg><span class="chats me-auto">0</span><svg width="14" height="10"><use href="#eye"/></svg><span class="views">5</span><svg class="blue" width="15" height="15"><use href="#info"/></svg><svg class="blue gap10" width="15" height="15"><use href="#expand"/></svg></div>
     </article>

     <article class="tile">
      <svg class="sq" width="550" height="198" viewBox="48 54 1650 594">
       <rect x="49" y="55" width="1648" height="120" fill="#dfe7f3" stroke="#bccde4" stroke-width="3"/><rect x="48" y="176" width="1650" height="8" fill="#9fb4da"/><rect x="847" y="177" width="55" height="7" fill="#7d8796"/><path d="M1528 64v94" stroke="#c2d3e6" stroke-width="3"/>
       <rect x="48" y="189" width="1650" height="42" fill="#e3e9f5"/><rect x="48" y="208" width="1650" height="10" fill="#d6deed"/><path d="M48 235h1623" stroke="#dde2ea" stroke-width="3"/>
       <g fill="#fff" stroke="#aaa" stroke-width="3"><rect x="169" y="77" width="177" height="23" stroke="#ccc"/><rect x="169" y="122" width="301" height="27"/><rect x="637" y="73" width="280" height="28"/><rect x="637" y="122" width="298" height="27"/><rect x="142" y="194" width="54" height="27"/><rect x="361" y="199" width="121" height="28"/><rect x="1549" y="83" width="118" height="27" fill="#eee" stroke="#bbb"/></g><rect x="919" y="74" width="25" height="27" fill="#d2d4db"/><path d="M925 84h13l-6 8zM327 83h10l-5 9z" fill="#444"/>
       <g class="ver" fill="#555" style="font-size:16px"><text x="68" y="95" textLength="80">Category:</text><text x="68" y="141" textLength="90">Start Date:</text><text x="518" y="95" textLength="107">Subcategory:</text><text x="518" y="141" textLength="80">End Date:</text><text x="177" y="95" textLength="43">Bikes</text><text x="173" y="141" textLength="185">1/1/2003 12:00:00 AM</text><text x="640" y="95" textLength="87">Road Bikes</text><text x="640" y="141" textLength="206">12/31/2009 12:00:00 AM</text><text x="1560" y="104" textLength="96">View Report</text><text x="147" y="215">1</text><text x="204" y="215" textLength="32">of 1</text><text x="489" y="219" fill="#888" textLength="91">Find | Next</text></g>
       <g fill="#9fa7b5"><path d="M66 202h3v14h-3zM82 202v14l-10-7zM123 202v14l-10-7zM256 202v14l10-7zM295 202v14l10-7zM308 202h3v14h-3z"/></g><path d="M628 197h17v14h-17z" fill="#3c51a5"/><path d="M632 197h8v6h-8z" fill="#fff"/><path d="M637 208h8v-4l7 7-7 7v-4h-8z" fill="#45a145"/><path d="M658 205h9l-5 5z" fill="#222"/><circle cx="711" cy="208" r="12" fill="#afd8ed"/><path d="M704 204l8-5 3 7zM718 212l-8 5-3-7z" fill="#36a465"/><rect x="757" y="198" width="22" height="22" rx="3" fill="#f27a32"/><path d="M763 202v14M763 203h10v7h-8" stroke="#fff" stroke-width="3" fill="none"/>
       <g fill="none" stroke-linecap="round" stroke-linejoin="round" stroke="#6c68cf" stroke-width="4"><path d="M353 315q4-36 34-38M412 298q8 24-4 44M446 344q-34-14-18-46 8-16 38-17"/></g>
       <circle cx="388" cy="262" r="12"/><path d="M402 262h48l-3 12-16 10 28 29-6 4-38-32 8-9-18 2-6 26-14 6-8-2 14-30z"/><path d="M376 305l10-20 9 4-9 20z"/>
       <path d="M463 312q45-22 81-28 40-2 49 16-15 8-37-4-40-2-93 22z" fill="#cc3c1e"/><path d="M467 305q24-28 33-38-18 30-3 27-14 8-30 11zM488 309q35-3 62 6-12 8-34 0z" fill="#6563d5"/>
       <text x="80" y="346" class="ari bd" font-style="italic" fill="#cd3f27" style="font-size:28px" textLength="274" lengthAdjust="spacingAndGlyphs">ADVENTURE WORKS</text><text x="222" y="388" fill="#000" stroke="#000" stroke-width="3" style="font:700 41px 'DejaVu Sans',sans-serif" textLength="256" lengthAdjust="spacingAndGlyphs">cycles</text>
       <defs><linearGradient id="fade"><stop offset="0" stop-color="#6a5acd"/><stop offset=".45" stop-color="#7a70d0"/><stop offset="1" stop-color="#d5d0f2"/></linearGradient><pattern id="chain" width="24" height="24" y="427" patternUnits="userSpaceOnUse"><path d="M0 3h7v7H0zM12 3h7v5h-7zM6 11h8v5H6zM18 11h6v5h-6zM0 18h8v4H0zM12 18h8v4h-8z" fill="#fff" opacity=".9"/></pattern></defs><rect x="57" y="415" width="451" height="38" fill="#6a5acd"/><rect x="508" y="415" width="539" height="37" fill="url(#fade)"/><rect x="508" y="427" width="539" height="26" fill="url(#chain)"/>
       <text x="400" y="497" class="ari bd" fill="#6456c5" style="font-size:23px" textLength="316">1/1/2003 through 12/31/2009</text>
       <rect x="1671" y="235" width="27" height="420" fill="#f1f1f1"/><rect x="1674" y="261" width="21" height="120" fill="#c1c1c1"/><path d="M1680 251h10l-5-6z" fill="#666"/>
      </svg>
     </article>

     <article class="tile">
      <svg class="sq" width="550" height="198" viewBox="754 498 550 198">
       <rect x="754" y="498" width="550" height="198" fill="#c3c3c3"/><rect x="1267" y="498" width="30" height="14" fill="#aebbd0"/><rect x="1267" y="513" width="30" height="15" fill="#c2c9d4"/><rect x="1267" y="517" width="30" height="11" fill="#72aac2"/><rect x="754" y="529" width="17" height="160" fill="#b3bbc8"/><path d="M771 530v130M771 621h26M1269 621h28" stroke="#a5aaa9" stroke-width="2"/>
       <svg x="754" y="498" width="145" height="31"><use href="#tools"/></svg><rect x="754" y="498" width="43" height="31" fill="#555" opacity=".25"/><svg x="755.500" y="531" width="17" height="53"><use href="#rail"/></svg><rect x="755" y="532" width="16" height="51" fill="#555" opacity=".2"/>
       <rect x="796" y="498" width="474" height="190" fill="#e3e9f2"/><rect x="796" y="498" width="474" height="12" fill="#afbfd4"/><rect x="801" y="514" width="148" height="12" fill="#92a3c3"/><rect x="952" y="514" width="315" height="12" fill="#92a3c3"/><rect x="801" y="526" width="148" height="170" fill="#fff"/><rect x="801" y="526" width="148" height="12" fill="#dce5ee"/><rect x="952" y="526" width="315" height="170" fill="#fff"/><rect x="952" y="527" width="315" height="61" fill="#e2e8ef"/>
       <path d="M952 537.500h315M952 547.500h315M952 557.500h315M952 567.500h315M952 577.500h315M952 587.500h315M801 548.500h148M801 559.500h148M801 570.500h148M801 581.500h148M801 592.500h148M801 603.500h148" stroke="#ccd4df"/>
       <g class="tah" fill="#424b59" style="font-size:6px"><text x="800" y="507" textLength="24">Prompts</text><text x="803" y="523" class="bd" fill="#fff" textLength="49">Prompt Summary</text><text x="804" y="534" textLength="143">visualbi.demodata.pd_demo.mechanical_downtime/CV_...</text><rect x="957" y="516" width="9" height="10" fill="#8ed6eb"/><text x="959" y="523" textLength="6">All</text><text x="975" y="523" textLength="22">Required</text><text x="1007" y="523" textLength="20">Optional</text>
       <text x="964" y="534" textLength="27">VAR_YEAR</text><text x="964" y="544" textLength="38">VAR_QUARTER</text><text x="964" y="554" textLength="33">VAR_MONTH</text><text x="964" y="564" textLength="28">VAR_WEEK</text><text x="964" y="574" textLength="27">VAR_DATE</text><text x="964" y="584" textLength="48">VAR_RIG_NUMBER</text>
       <g class="bd" fill="#1c2430"><text x="820" y="545" textLength="34">VAR_YEAR :</text><text x="820" y="556" textLength="47">VAR_QUARTER :</text><text x="820" y="567" textLength="40">VAR_MONTH :</text><text x="820" y="578" textLength="37">VAR_WEEK :</text><text x="820" y="589" textLength="34">VAR_DATE :</text><text x="820" y="600" textLength="59">VAR_RIG_NUMBER :</text></g><text x="856" y="545" textLength="13">2014</text><text x="862" y="567" textLength="19">201401</text><text x="1270" y="523" textLength="26">Auto Upda</text><text x="1270" y="565" textLength="26" lengthAdjust="spacingAndGlyphs">_DOWNTIN</text></g>
       <g fill="#2e9e2e"><circle cx="813.500" cy="543" r="3.500"/><circle cx="813.500" cy="554" r="3.500"/><circle cx="813.500" cy="565" r="3.500"/><circle cx="813.500" cy="576" r="3.500"/><circle cx="813.500" cy="587" r="3.500"/><circle cx="813.500" cy="598" r="3.500"/></g><path fill="none" stroke="#fff" d="M811.500 543l1.500 1.500 2.500-3M811.500 554l1.500 1.500 2.500-3M811.500 565l1.500 1.500 2.500-3M811.500 576l1.500 1.500 2.500-3M811.500 587l1.500 1.500 2.500-3M811.500 598l1.500 1.500 2.500-3"/>
       <path fill="#566" d="M958 530l2.500 2-2.500 2zM958 540l2.500 2-2.500 2zM958 550l2.500 2-2.500 2zM958 560l2.500 2-2.500 2zM958 570l2.500 2-2.500 2zM958 580l2.500 2-2.500 2z"/><circle cx="1254" cy="520.500" r="2" fill="none" stroke="#fff" stroke-width="1.500"/><path d="M1260 521h3l-1.500 1.500z"/><path d="M1254 503h4v3h-4zM1262 503l4 4M1266 503l-4 4M970.500 518v6M1001.500 518v6" stroke="#e8eef5" fill="none" stroke-width=".8"/>
       <rect x="1296.500" y="498" width="8" height="198" fill="#f1f1f1"/><rect x="1297.500" y="507" width="5.500" height="180" fill="#c1c1c1"/><path d="M1299 504h3l-1.500-2z" fill="#666"/><rect x="1297" y="587" width="7" height="14" fill="#a5b6d2"/><path d="M1302 592v4l-2.500-2z" fill="#345"/>
      </svg>
     </article>
    </div></div>
    <div class="trackbar"><div></div></div>
    </div>
   </section>
  </main>
 </div>
</div>
<div class="base"><div></div></div>
<script src="https://cdn.jsdelivr.net/npm/bootstrap@5.3.0/dist/js/bootstrap.bundle.min.js"></script>
<script>
// One string per tournament: b = blue, g = green, y = yellow, o = orange, bottom to top
const stacks=['bg','','bgo','bg','b','bgy','bg','o','','gy','bgy','bgo','b','','bgy','bg','bg','bgo'];
const tone={b:'#3f7fbd',g:'#a5cf2f',y:'#f6c90e',o:'#ff8c00'};
document.getElementById('cupBars').innerHTML=stacks.map((s,i)=>{
 const x=177+i*67.95;let out='';
 [...s].forEach((c,k)=>out+=`<rect x="${x}" y="${573-k*13}" width="57" height="12" style="shape-rendering:auto" fill="${tone[c]}"/>`);
 if(!s)out+=`<rect x="${x}" y="584" width="55" height="2" fill="#e56a9c"/>`;
 const y=s.length?562-s.length*6.5+(s.length==3?-6:0):575;
 return out+`<rect x="${x+18}" y="${y-15}" width="18" height="17" fill="#fff"/><text x="${x+20}" y="${y}" class="ari" style="font-size:18px" fill="#444">${s.length}</text>`;
}).join('');
</script>
</body>
</html>
